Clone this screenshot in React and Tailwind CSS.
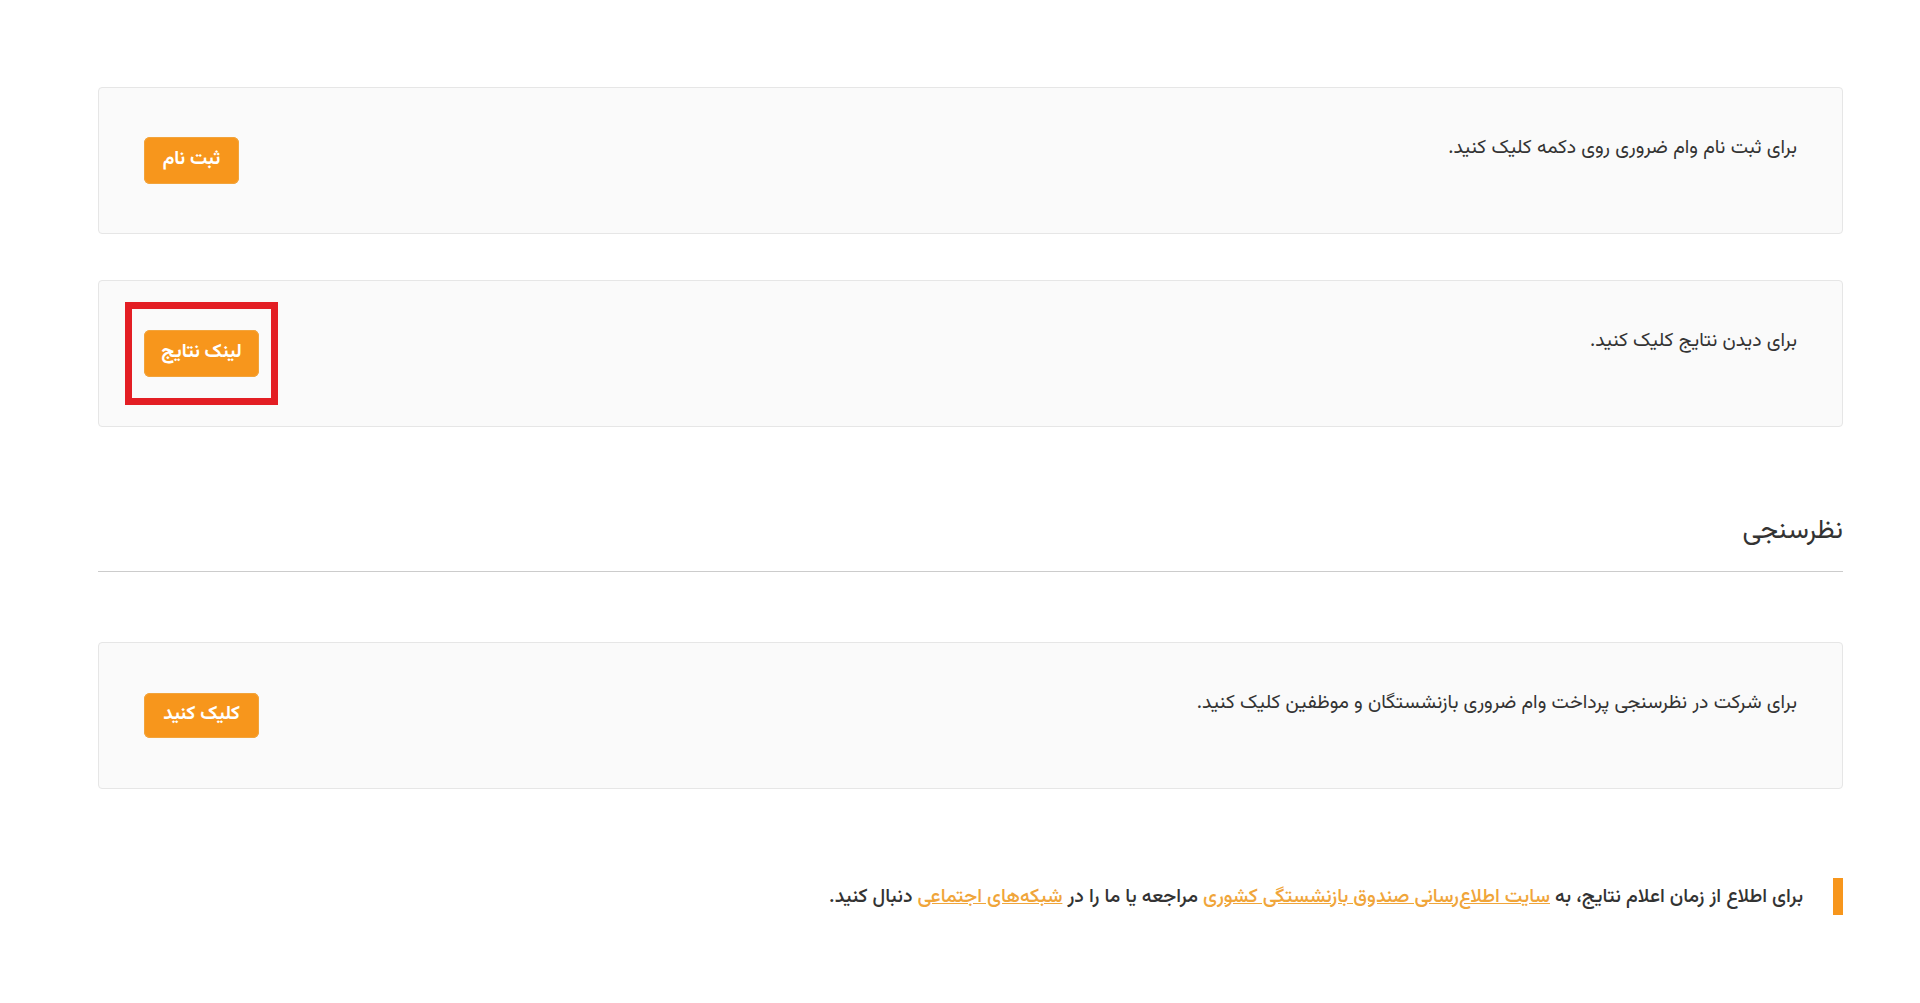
import React from "react";

const font = { fontFamily: '"Vazirmatn","Noto Sans Arabic","DejaVu Sans",sans-serif' };

function Card({ text, label, btnW, btnH = "h-[47px]", highlight }) {
  const btn = (
    <button
      className={`${btnW} ${btnH} rounded-[6px] bg-[#f7961c] text-[19px] font-bold text-white shadow-[inset_0_0_0_1px_#f2a43c]`}
    >
      {label}
    </button>
  );
  return (
    <div className="flex h-[147px] items-center justify-between rounded-[4px] border border-[#e6e6e6] bg-[#fafafa] px-[45px]">
      <p className="mb-[25px] text-[19.5px] leading-[28px] text-[#333]">{text}</p>
      {highlight ? (
        <div className="relative">
          {btn}
          <div className="absolute -inset-x-[19px] -inset-y-[28px] border-[7px] border-[#e31e24]" />
        </div>
      ) : (
        btn
      )}
    </div>
  );
}

export default function App() {
  return (
    <div dir="rtl" style={font} className="min-h-screen bg-white">
      <div className="pl-[98px] pr-[77px] pt-[87px] pb-[80px]">
        <Card text="برای ثبت نام وام ضروری روی دکمه کلیک کنید." label="ثبت نام" btnW="w-[95px]" />
        <div className="mt-[46px]">
          <Card text="برای دیدن نتایج کلیک کنید." label="لینک نتایج" btnW="w-[115px]" highlight />
        </div>
        <div className="mt-[85px] border-b border-[#cccccc] pb-[19px]">
          <h2 className="text-[27px] leading-[40px] text-[#333]">نظرسنجی</h2>
        </div>
        <div className="mt-[70px]">
          <Card
            text="برای شرکت در نظرسنجی پرداخت وام ضروری بازنشستگان و موظفین کلیک کنید."
            label="کلیک کنید"
            btnW="w-[115px]"
            btnH="h-[45px]"
          />
        </div>
        <div className="mt-[89px] flex h-[37px] items-center border-r-[10px] border-[#f7961c] pr-[30px]">
          <p className="text-[19.5px] font-medium leading-[28px] text-[#333]">
            برای اطلاع از زمان اعلام نتایج، به{" "}
            <a href="#" className="text-[#f0a53a] underline">
              سایت اطلاع‌رسانی صندوق بازنشستگی کشوری
            </a>{" "}
            مراجعه یا ما را در{" "}
            <a href="#" className="text-[#f0a53a] underline">
              شبکه‌های اجتماعی
            </a>{" "}
            دنبال کنید.
          </p>
        </div>
      </div>
    </div>
  );
}
